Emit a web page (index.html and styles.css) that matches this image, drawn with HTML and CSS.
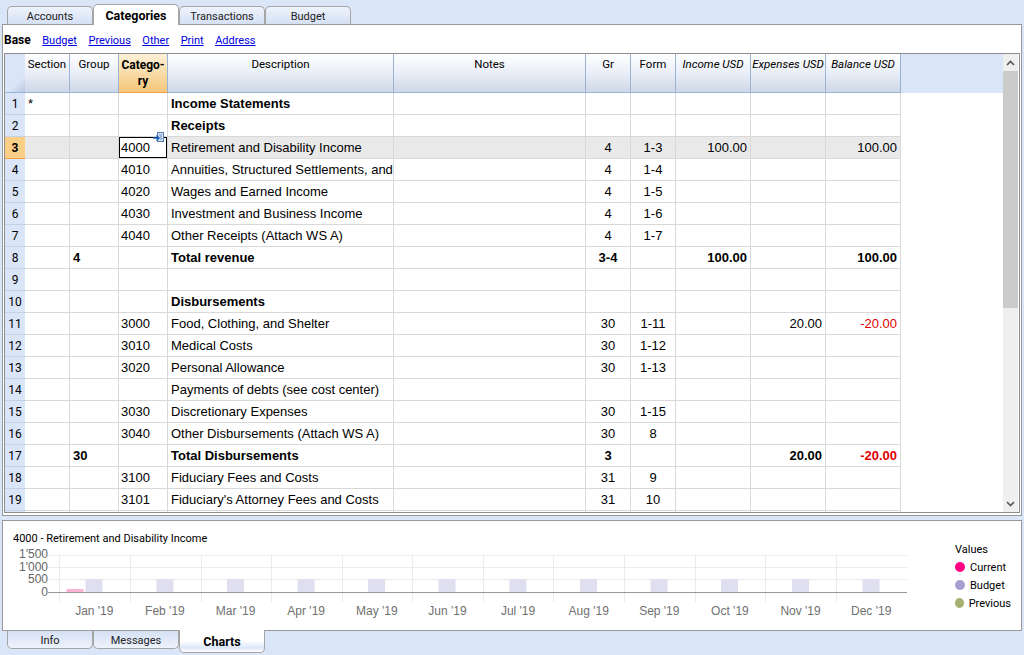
FILE: index.html
```html
<!DOCTYPE html>
<html lang="en">
<head>
  <meta charset="UTF-8">
  <title>Categories</title>
  <link rel="stylesheet" href="styles.css">
</head>
<body>
  <nav class="tabs tabs-top">
    <a class="tab">Accounts</a>
    <a class="tab active">Categories</a>
    <a class="tab">Transactions</a>
    <a class="tab">Budget</a>
  </nav>

  <section class="main-panel">
    <div class="views">
      <b>Base</b>
      <a href="#">Budget</a>
      <a href="#">Previous</a>
      <a href="#">Other</a>
      <a href="#">Print</a>
      <a href="#">Address</a>
    </div>

    <div class="grid-box">
      <div class="grid-clip">
        <table class="grid">
          <colgroup>
            <col class="c-row"><col class="c-sec"><col class="c-grp"><col class="c-cat"><col class="c-desc"><col class="c-notes"><col class="c-gr"><col class="c-form"><col class="c-amt"><col class="c-amt"><col class="c-amt">
          </colgroup>
          <thead>
            <tr>
              <th class="corner"></th>
              <th>Section</th>
              <th>Group</th>
              <th class="cur">Catego-<br>ry</th>
              <th>Description</th>
              <th>Notes</th>
              <th>Gr</th>
              <th>Form</th>
              <th class="it">Income USD</th>
              <th class="it">Expenses USD</th>
              <th class="it">Balance USD</th>
            </tr>
          </thead>
          <tbody>
            <tr><td class="rn">1</td><td>*</td><td></td><td></td><td class="b">Income Statements</td><td></td><td></td><td></td><td></td><td></td><td></td></tr>
            <tr><td class="rn">2</td><td></td><td></td><td></td><td class="b">Receipts</td><td></td><td></td><td></td><td></td><td></td><td></td></tr>
            <tr class="sel"><td class="rn">3</td><td></td><td></td><td class="code cell-on">4000<svg class="note-ic" width="11" height="11" viewBox="0 0 11 11"><rect x="4.500" y="0.500" width="6" height="9" fill="#d5e0f0" stroke="#4f7db8"/><path d="M6 3h3M7 5h2M7 7h2" stroke="#6f93c6"/><path d="M0 6h6M3.500 3.500L6 6 3.500 8.500" fill="none" stroke="#1f63b8" stroke-width="1.500"/></svg></td><td>Retirement and Disability Income</td><td></td><td class="c">4</td><td class="c">1-3</td><td class="r">100.00</td><td></td><td class="r">100.00</td></tr>
            <tr><td class="rn">4</td><td></td><td></td><td class="code">4010</td><td><div class="clip">Annuities, Structured Settlements, and</div></td><td></td><td class="c">4</td><td class="c">1-4</td><td></td><td></td><td></td></tr>
            <tr><td class="rn">5</td><td></td><td></td><td class="code">4020</td><td>Wages and Earned Income</td><td></td><td class="c">4</td><td class="c">1-5</td><td></td><td></td><td></td></tr>
            <tr><td class="rn">6</td><td></td><td></td><td class="code">4030</td><td>Investment and Business Income</td><td></td><td class="c">4</td><td class="c">1-6</td><td></td><td></td><td></td></tr>
            <tr><td class="rn">7</td><td></td><td></td><td class="code">4040</td><td>Other Receipts (Attach WS A)</td><td></td><td class="c">4</td><td class="c">1-7</td><td></td><td></td><td></td></tr>
            <tr class="b"><td class="rn">8</td><td></td><td>4</td><td></td><td>Total revenue</td><td></td><td class="c">3-4</td><td></td><td class="r">100.00</td><td></td><td class="r">100.00</td></tr>
            <tr><td class="rn">9</td><td></td><td></td><td></td><td></td><td></td><td></td><td></td><td></td><td></td><td></td></tr>
            <tr><td class="rn">10</td><td></td><td></td><td></td><td class="b">Disbursements</td><td></td><td></td><td></td><td></td><td></td><td></td></tr>
            <tr><td class="rn">11</td><td></td><td></td><td class="code">3000</td><td>Food, Clothing, and Shelter</td><td></td><td class="c">30</td><td class="c">1-11</td><td></td><td class="r">20.00</td><td class="r neg">-20.00</td></tr>
            <tr><td class="rn">12</td><td></td><td></td><td class="code">3010</td><td>Medical Costs</td><td></td><td class="c">30</td><td class="c">1-12</td><td></td><td></td><td></td></tr>
            <tr><td class="rn">13</td><td></td><td></td><td class="code">3020</td><td>Personal Allowance</td><td></td><td class="c">30</td><td class="c">1-13</td><td></td><td></td><td></td></tr>
            <tr><td class="rn">14</td><td></td><td></td><td></td><td>Payments of debts (see cost center)</td><td></td><td></td><td></td><td></td><td></td><td></td></tr>
            <tr><td class="rn">15</td><td></td><td></td><td class="code">3030</td><td>Discretionary Expenses</td><td></td><td class="c">30</td><td class="c">1-15</td><td></td><td></td><td></td></tr>
            <tr><td class="rn">16</td><td></td><td></td><td class="code">3040</td><td>Other Disbursements (Attach WS A)</td><td></td><td class="c">30</td><td class="c">8</td><td></td><td></td><td></td></tr>
            <tr class="b"><td class="rn">17</td><td></td><td>30</td><td></td><td>Total Disbursements</td><td></td><td class="c">3</td><td></td><td></td><td class="r">20.00</td><td class="r neg">-20.00</td></tr>
            <tr><td class="rn">18</td><td></td><td></td><td class="code">3100</td><td>Fiduciary Fees and Costs</td><td></td><td class="c">31</td><td class="c">9</td><td></td><td></td><td></td></tr>
            <tr><td class="rn">19</td><td></td><td></td><td class="code">3101</td><td>Fiduciary's Attorney Fees and Costs</td><td></td><td class="c">31</td><td class="c">10</td><td></td><td></td><td></td></tr>
            <tr><td class="rn"></td><td></td><td></td><td></td><td></td><td></td><td></td><td></td><td></td><td></td><td></td></tr>
          </tbody>
        </table>
      </div>
      <div class="scrollbar">
        <div class="sb-btn"><svg width="9" height="6" viewBox="0 0 9 6"><path d="M1 5l3.500-3.500L8 5" fill="none" stroke="#555" stroke-width="1.600"/></svg></div>
        <div class="sb-track"><div class="sb-thumb"></div></div>
        <div class="sb-btn"><svg width="9" height="6" viewBox="0 0 9 6"><path d="M1 1l3.500 3.500L8 1" fill="none" stroke="#555" stroke-width="1.600"/></svg></div>
      </div>
    </div>
  </section>

  <section class="chart-panel">
    <div class="chart-area">
      <h4 class="chart-title">4000 - Retirement and Disability Income</h4>
      <svg class="chart" width="910" height="60" viewBox="0 0 910 60">
        <g stroke="#ebebeb" stroke-width="1">
          <path d="M45 6.500H904M45 18.500H904M45 30.500H904"/>
          <path d="M56.500 6V53M127.500 6V53M198.500 6V53M268.500 6V53M339.500 6V53M409.500 6V53M480.500 6V53M550.500 6V53M621.500 6V53M692.500 6V53M762.500 6V53M833.500 6V53"/>
        </g>
        <g fill="#e0dff0">
          <rect x="82.500" y="30" width="17" height="13"/><rect x="153.500" y="30" width="17" height="13"/><rect x="224" y="30" width="17" height="13"/><rect x="294.500" y="30" width="17" height="13"/><rect x="365" y="30" width="17" height="13"/><rect x="435.500" y="30" width="17" height="13"/><rect x="506.500" y="30" width="17" height="13"/><rect x="577" y="30" width="17" height="13"/><rect x="647.500" y="30" width="17" height="13"/><rect x="718" y="30" width="17" height="13"/><rect x="789" y="30" width="17" height="13"/><rect x="859.500" y="30" width="17" height="13"/>
        </g>
        <rect x="63.500" y="40" width="17" height="3" fill="#fdb3d3"/>
        <path d="M45 43.500H904" stroke="#9a9a9a"/>
      </svg>
      <div class="y-labels"><span>1'500</span><span>1'000</span><span>500</span><span>0</span></div>
      <div class="x-labels"><span>Jan '19</span><span>Feb '19</span><span>Mar '19</span><span>Apr '19</span><span>May '19</span><span>Jun '19</span><span>Jul '19</span><span>Aug '19</span><span>Sep '19</span><span>Oct '19</span><span>Nov '19</span><span>Dec '19</span></div>
    </div>
    <div class="legend">
      <div class="legend-title">Values</div>
      <div class="legend-row"><i class="dot dot-cur"></i>Current</div>
      <div class="legend-row"><i class="dot dot-bud"></i>Budget</div>
      <div class="legend-row"><i class="dot dot-prev"></i>Previous</div>
    </div>
  </section>

  <nav class="tabs tabs-bottom">
    <a class="tab">Info</a>
    <a class="tab">Messages</a>
    <a class="tab active">Charts</a>
  </nav>
</body>
</html>
```

FILE: styles.css
```css
html, body {
  margin: 0;
  height: 655px;
  overflow: hidden;
}
body {
  background-color: #dae5f8;
  font-family: Roboto, "Noto Sans", sans-serif;
  font-size: 11px;
  color: #000;
  padding: 0 2px;
  box-sizing: border-box;
}

/* tabs */
.tabs {
  display: flex;
  padding-left: 5px;
}
.tabs-top {
  height: 24px;
  align-items: flex-end;
}
.tab {
  width: 86px;
  box-sizing: border-box;
  text-align: center;
  border: 1px solid #a5a5a5;
  color: #222;
}
.tabs-top .tab {
  height: 18px;
  line-height: 20px;
  border-bottom: none;
  border-radius: 5px 5px 0 0;
  background: linear-gradient(#eef3fc, #d5e0f4);
}
.tabs-top .tab.active {
  height: 21px;
  line-height: 21px;
  background: #fff;
  font-size: 12.5px;
  font-weight: bold;
  color: #000;
  position: relative;
  top: 1px;
}
.tabs-bottom {
  height: 25px;
  align-items: flex-start;
}
.tabs-bottom .tab {
  height: 18px;
  line-height: 20px;
  border-top: none;
  border-radius: 0 0 5px 5px;
  background: linear-gradient(#d5e0f4, #eef3fc);
}
.tabs-bottom .tab.active {
  height: 23px;
  line-height: 24px;
  background: linear-gradient(#fff 50%, #dde7f8 80%, #fff);
  font-size: 12.5px;
  font-weight: bold;
  color: #000;
  position: relative;
  top: -1px;
}

/* main panel */
.main-panel {
  height: 492px;
  box-sizing: border-box;
  background: #fff;
  border: 1px solid #9a9a9a;
  padding: 0 1px;
}
.views {
  height: 28px;
  box-sizing: border-box;
  padding-top: 2px;
  display: flex;
  align-items: center;
  gap: 11.5px;
}
.views b {
  font-size: 12px;
}
.views a {
  color: #0000e0;
}
.grid-box {
  display: flex;
  height: 460px;
  box-sizing: border-box;
  border: 1px solid #8e8e8e;
  background: #fff;
}
.grid-clip {
  width: 998px;
  height: 458px;
  overflow: hidden;
  background: linear-gradient(#dae5f8 39px, #fff 39px);
}

/* grid */
.grid {
  table-layout: fixed;
  width: 896px;
  border-collapse: separate;
  border-spacing: 0;
  font-family: "Liberation Sans", Arial, sans-serif;
  font-size: 13px;
}
.c-row { width: 20px; }
.c-sec { width: 45px; }
.c-grp { width: 49px; }
.c-cat { width: 49px; }
.c-desc { width: 226px; }
.c-notes { width: 192px; }
.c-gr { width: 45px; }
.c-form { width: 45px; }
.c-amt { width: 75px; }
.grid th {
  height: 39px;
  box-sizing: border-box;
  padding: 3px 1px 0;
  vertical-align: top;
  text-align: center;
  font-family: Roboto, "Noto Sans", sans-serif;
  font-size: 11.5px;
  font-weight: normal;
  line-height: 15px;
  background: linear-gradient(#fff, #e9eef7 50%, #cfd8e8);
  border-right: 1px solid #98b3d4;
  border-bottom: 1px solid #98b3d4;
}
.grid th.corner {
  background: linear-gradient(135deg, #dae5f8 70%, #b9c7de);
  border-right: none;
}
.grid th.cur {
  font-size: 12px;
  font-weight: bold;
  line-height: 16px;
  background: linear-gradient(#fdf1d8, #f5c67a);
  border-bottom-color: #f0a040;
}
.grid th.it {
  font-style: italic;
  white-space: nowrap;
  overflow: hidden;
}
.grid td {
  height: 22px;
  box-sizing: border-box;
  padding: 0 3px;
  white-space: nowrap;
  overflow: hidden;
  border-right: 1px solid #d8d8d8;
  border-bottom: 1px solid #d8d8d8;
}
.grid td.code { padding-left: 2px; }
.grid td.rn {
  padding: 0;
  text-align: center;
  font-family: Roboto, "Noto Sans", sans-serif;
  font-size: 12px;
  font-weight: normal;
  background: #dae5f8;
  border-right: none;
  border-bottom: 1px solid #c4d2e8;
}
.b { font-weight: bold; }
.c { text-align: center; }
.r { text-align: right; }
.neg { color: #e00000; }
.clip { overflow: hidden; width: 222px; }
.sel td { background: #e9e9e9; }
.sel td.rn {
  background: #fbcf85;
  font-weight: bold;
  border-bottom-color: #f0a040;
}
.sel td.cell-on {
  background: #fff;
  position: relative;
  overflow: visible;
  box-shadow: inset 0 0 0 1px #000;
}
.note-ic {
  position: absolute;
  top: -5px;
  right: 3px;
}

/* scrollbar */
.scrollbar {
  width: 15px;
  margin-right: 1px;
  display: flex;
  flex-direction: column;
  background: #efefef;
}
.sb-btn {
  height: 17px;
  display: flex;
  align-items: center;
  justify-content: center;
}
.sb-track {
  flex: 1;
}
.sb-thumb {
  height: 237px;
  background: #cbcbcb;
}

/* chart */
.chart-panel {
  position: relative;
  margin-top: 4px;
  height: 111px;
  box-sizing: border-box;
  background: #fff;
  border: 1px solid #9a9a9a;
  display: flex;
}
.chart-area {
  position: relative;
  flex: 1;
}
.chart-title {
  margin: 0;
  padding: 11px 0 0 10px;
  height: 26px;
  box-sizing: border-box;
  font-size: 11px;
  font-weight: normal;
}
.chart {
  position: absolute;
  left: 0;
  top: 28px;
}
.y-labels {
  position: absolute;
  left: 0;
  top: 27px;
  width: 45px;
  font-family: "Liberation Sans", Arial, sans-serif;
  font-size: 12px;
  color: #666;
  text-align: right;
  line-height: 12.6px;
}
.y-labels span { display: block; }
.x-labels {
  position: absolute;
  left: 56px;
  top: 83px;
  display: flex;
  font-family: "Liberation Sans", Arial, sans-serif;
  font-size: 12px;
  color: #707070;
}
.x-labels span {
  width: 70.64px;
  text-align: center;
}
.legend {
  position: absolute;
  right: 10px;
  top: 22px;
  width: 56px;
  font-size: 11px;
}
.legend-row {
  display: flex;
  align-items: center;
  gap: 5px;
  height: 18px;
}
.legend-title { height: 15px; }
.dot {
  width: 10px;
  height: 10px;
  border-radius: 50%;
}
.dot-cur { background: #ff0080; }
.dot-bud { background: #a4a0d4; }
.dot-prev { background: #a4b070; }
```
